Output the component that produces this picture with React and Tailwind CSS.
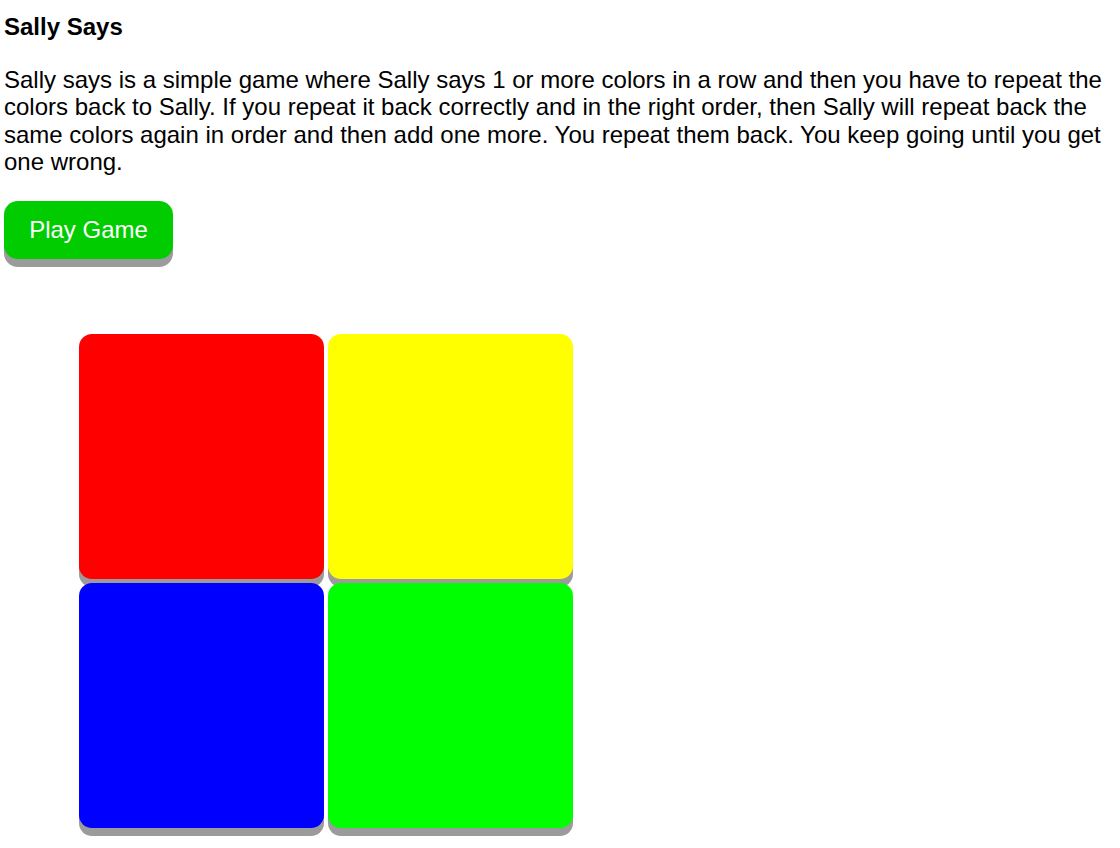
export default function App() {
  const pads = [
    { id: "red", cls: "bg-[#ff0000]" },
    { id: "yellow", cls: "bg-[#ffff00]" },
    { id: "blue", cls: "bg-[#0000ff]" },
    { id: "green", cls: "bg-[#00ff00]" },
  ];

  return (
    <div className="bg-white min-h-[848px] px-1 pt-[13px] text-black font-['Liberation_Sans',Arial,sans-serif] text-[24px] leading-[27.6px]">
      <h1 className="font-bold text-[24px] leading-[27.6px]">Sally Says</h1>
      <p className="mt-[25px]">
        Sally says is a simple game where Sally says 1 or more colors in a row and then you have to repeat the
        colors back to Sally. If you repeat it back correctly and in the right order, then Sally will repeat back the
        same colors again in order and then add one more. You repeat them back. You keep going until you get
        one wrong.
      </p>
      <button className="mt-[25px] h-[58px] w-[169px] rounded-[14px] bg-[#00cc00] text-white text-[24px] shadow-[0_8px_0_#9b9b9b]">
        Play Game
      </button>
      <div className="mt-[75px] ml-[75px] grid grid-cols-[245px_245px] gap-1 w-max">
        {pads.map((p) => (
          <div key={p.id} className={`h-[245px] w-[245px] rounded-[13px] shadow-[0_8px_0_#9b9b9b] ${p.cls}`} />
        ))}
      </div>
    </div>
  );
}
